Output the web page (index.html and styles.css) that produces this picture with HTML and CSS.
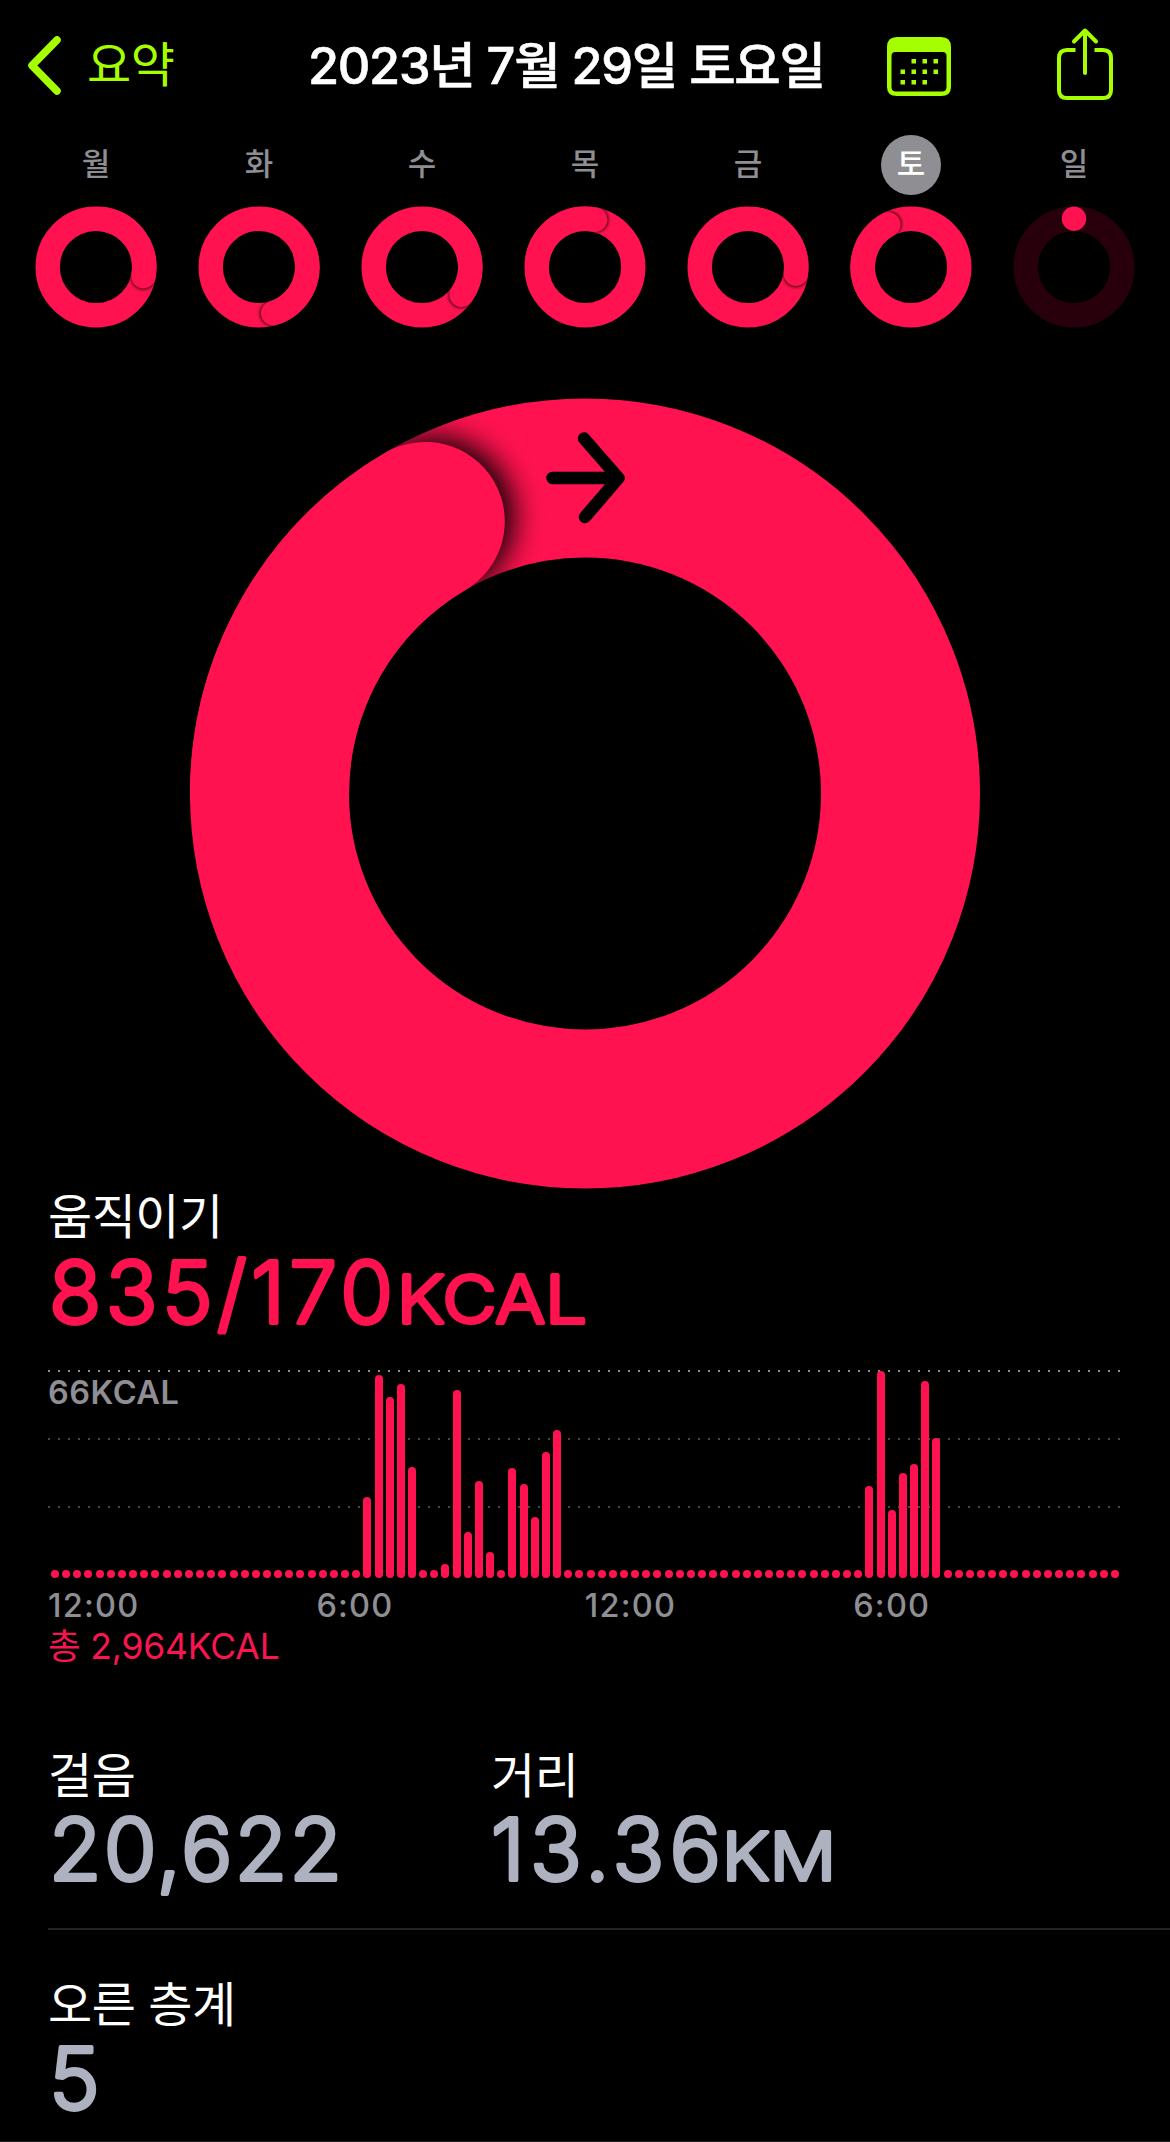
FILE: index.html
```html
<!DOCTYPE html>
<html lang="ko">
<head>
	<meta charset="utf-8">
	<title>2023년 7월 29일 토요일</title>
	<link rel="stylesheet" href="styles.css">
</head>
<body>
	<header>
		<a class="back">
			<svg class="chevron" width="36" height="60" viewBox="0 0 36 60"><path d="M30 5 L5 30.500 L30 56"/></svg>
			<span>요약</span>
		</a>
		<h1>2023년 7월 29일 토요일</h1>
		<svg class="calendar" width="64" height="60" viewBox="0 0 64 60">
			<path fill-rule="evenodd" d="M10 0H54Q64 0 64 10V50Q64 59 54 59H10Q0 59 0 50V10Q0 0 10 0ZM8.500 15Q4.500 15 4.500 19V50Q4.500 54.500 9 54.500H55Q59.500 54.500 59.500 50V19Q59.500 15 55.500 15Z"/>
			<path d="M24.500 22h4.500v4.500h-4.500zM35.500 22h4.500v4.500h-4.500zM46.500 22h4.500v4.500h-4.500zM13.500 32.500h4.500v4.500h-4.500zM24.500 32.500h4.500v4.500h-4.500zM35.500 32.500h4.500v4.500h-4.500zM46.500 32.500h4.500v4.500h-4.500zM13.500 43h4.500v4.500h-4.500zM24.500 43h4.500v4.500h-4.500zM35.500 43h4.500v4.500h-4.500z"/>
		</svg>
		<svg class="share" width="56" height="72" viewBox="0 0 56 72">
			<path d="M18.500 22H10Q2 22 2 30V62Q2 70 10 70H46Q54 70 54 62V30Q54 22 46 22H37.500"/>
			<path class="round" d="M28 45V2.500M17 13.500L28 2.500L39 13.500"/>
		</svg>
	</header>

	<div id="week"></div>

	<svg id="ring" viewBox="0 0 792 792" width="792" height="792">
		<defs>
			<clipPath id="band">
				<path clip-rule="evenodd" d="M1 396.500a395 395 0 1 0 790 0a395 395 0 1 0 -790 0ZM160 396.500a236 236 0 1 0 472 0a236 236 0 1 0 -472 0Z"/>
			</clipPath>
			<filter id="soft" x="-50%" y="-50%" width="200%" height="200%">
				<feGaussianBlur stdDeviation="15"/>
			</filter>
		</defs>
		<circle class="band" cx="396" cy="396.500" r="315.500"/>
		<g clip-path="url(#band)">
			<circle cx="245" cy="120" r="79.500" filter="url(#soft)"/>
		</g>
		<path class="band cap" d="M80.500 396.500A315.500 315.500 0 0 1 236.300 124.400"/>
		<path class="arrow" d="M363.500 81H429M395 41.500L429.500 81L396 120"/>
	</svg>

	<section class="move">
		<h2>움직이기</h2>
		<svg class="value" width="600" height="90">
			<text x="1" y="75" textLength="344">835/170</text>
			<text class="unit" x="349" y="75" textLength="190" lengthAdjust="spacingAndGlyphs">KCAL</text>
		</svg>
		<div id="chart">
			<span class="peak">66KCAL</span>
			<div id="bars"></div>
		</div>
		<div class="hours">
			<span>12:00</span>
			<span>6:00</span>
			<span>12:00</span>
			<span>6:00</span>
		</div>
		<p class="total">총 2,964KCAL</p>
	</section>

	<section class="stats">
		<div class="stat">
			<h2>걸음</h2>
			<svg class="value" width="400" height="100">
				<text x="1" y="75" textLength="293">20,622</text>
			</svg>
		</div>
		<div class="stat">
			<h2>거리</h2>
			<svg class="value" width="400" height="100">
				<text x="0" y="75" textLength="230">13.36</text>
				<text class="unit" x="231" y="75" textLength="114" lengthAdjust="spacingAndGlyphs">KM</text>
			</svg>
		</div>
	</section>
	<section class="stats floors">
		<div class="stat">
			<h2>오른 층계</h2>
			<svg class="value" width="400" height="100">
				<text x="1" y="75">5</text>
			</svg>
		</div>
	</section>

	<script>
		// end = angle of the ring's tip, clockwise from the top
		var days = [
			{ name: "월", end: 101 },
			{ name: "화", end: 163 },
			{ name: "수", end: 125 },
			{ name: "목", end: 12 },
			{ name: "금", end: 98 },
			{ name: "토", end: 332, selected: true },
			{ name: "일", end: 0, empty: true }
		];

		// quarter hours with activity, bar heights in px
		var active = {
			28: 81, 29: 203, 30: 181, 31: 194, 32: 111,
			35: 14, 36: 188, 37: 46, 38: 97, 39: 26,
			41: 110, 42: 94, 43: 61, 44: 126, 45: 148,
			73: 92, 74: 207, 75: 68, 76: 105, 77: 114, 78: 197, 79: 140
		};

		drawWeek();
		drawBars();

		function drawWeek() {
			var html = "";
			for (var i = 0; i < days.length; i++) {
				html += '<div class="day' + (days[i].selected ? " selected" : "") + '">';
				html += "<span>" + days[i].name + "</span>" + miniRing(days[i], i) + "</div>";
			}
			document.querySelector("#week").innerHTML = html;
		}

		function miniRing(day, i) {
			var svg = '<svg width="122" height="122" viewBox="-61 -61 122 122">';
			if (day.empty) {
				return svg + '<circle class="track" r="48.3"/><circle class="dot" cy="-48.3" r="12.2"/></svg>';
			}
			svg += '<clipPath id="mini' + i + '"><path clip-rule="evenodd" d="M-60.500 0a60.500 60.500 0 1 0 121 0a60.500 60.500 0 1 0 -121 0ZM-36 0a36 36 0 1 0 72 0a36 36 0 1 0 -72 0Z"/></clipPath>';
			svg += '<circle class="track full" r="48.3"/>';
			svg += '<g clip-path="url(#mini' + i + ')"><g transform="rotate(' + day.end + ')">';
			svg += '<circle class="shade" cx="1" cy="-48.3" r="12.5"/></g></g>';
			svg += '<path class="tip" transform="rotate(' + day.end + ')" d="M-48.300 0A48.300 48.300 0 0 1 0 -48.300"/></svg>';
			return svg;
		}

		function drawBars() {
			var bars = document.querySelector("#bars");
			for (var i = 0; i < 96; i++) {
				var bar = document.createElement("div");
				bar.className = "bar";
				if (active[i]) {
					bar.style.height = active[i] + "px";
				}
				bars.appendChild(bar);
			}
		}
	</script>
</body>
</html>
```
FILE: styles.css
```css
* {
	box-sizing: border-box;
}

body {
	margin: 0;
	height: 2142px;
	overflow: hidden;
	background-color: #000;
	color: #fff;
	font-family: Inter, "Noto Sans CJK KR", sans-serif;
	border-bottom: 1px solid #1c1c1e;
}

svg {
	display: block;
	overflow: visible;
}

h1, h2, p {
	margin: 0;
}

header {
	height: 130px;
	display: flex;
	align-items: center;
	padding-left: 27px;
	fill: #a6ff00;
	color: #a6ff00;
}

.back {
	display: flex;
	align-items: center;
	width: 281px;
	font-size: 48px;
	letter-spacing: -0.5px;
}

.back span {
	margin-left: 24px;
	margin-top: -8px;
}

.chevron path {
	fill: none;
	stroke: #a6ff00;
	stroke-width: 7.5;
	stroke-linecap: round;
	stroke-linejoin: round;
}

h1 {
	width: 579px;
	margin-top: -7px;
	color: #fff;
	font-size: 50.5px;
	font-weight: 500;
	letter-spacing: -1.3px;
	white-space: nowrap;
	-webkit-text-stroke: 0.6px #fff;
}

.calendar {
	margin-top: 3px;
}

.share {
	margin-left: 106px;
	margin-top: -2px;
}

.share path {
	fill: none;
	stroke: #a6ff00;
	stroke-width: 4;
}

.share .round {
	stroke-linecap: round;
	stroke-linejoin: round;
}

#week {
	display: grid;
	grid-template-columns: repeat(7, 163px);
	justify-content: center;
	height: 267px;
	padding-top: 5px;
}

.day {
	display: flex;
	flex-direction: column;
	align-items: center;
	gap: 11px;
}

.day span {
	width: 60px;
	height: 60px;
	border-radius: 50%;
	line-height: 58px;
	text-align: center;
	font-size: 31px;
	font-weight: 500;
	color: #8e8e93;
}

.selected span {
	background-color: #8e8e93;
	color: #fff;
}

.track, .tip {
	fill: none;
	stroke: #28000b;
	stroke-width: 24.4;
}

.full, .tip {
	stroke: #ff124f;
}

.tip {
	stroke-linecap: round;
}

.dot {
	fill: #ff124f;
}

.shade {
	fill: rgba(50, 0, 15, 0.85);
	filter: blur(1.8px);
}

#ring {
	margin: 0 auto;
}

.band {
	fill: none;
	stroke: #ff124f;
	stroke-width: 159;
}

.cap {
	stroke-linecap: round;
}

.arrow {
	fill: none;
	stroke: #000;
	stroke-width: 12.5;
	stroke-linecap: round;
	stroke-linejoin: round;
}

.move {
	height: 555px;
	padding: 0 49px 0 48px;
}

h2 {
	height: 59px;
	line-height: 59px;
	font-size: 48px;
	font-weight: 400;
	letter-spacing: -0.5px;
	white-space: nowrap;
}

.move h2 {
	line-height: 56px;
}

.value text {
	font-size: 85.5px;
	font-weight: 300;
	fill: #ff124f;
	stroke: #ff124f;
	stroke-width: 3.8;
	stroke-linejoin: round;
}

.value .unit {
	font-size: 66px;
}

.stats .value text {
	fill: #aeb2c0;
	stroke: #aeb2c0;
}

#chart {
	height: 208px;
	margin-top: 32px;
	background-image:
		repeating-linear-gradient(to right, #8e8e93 0, #8e8e93 2px, transparent 2px, transparent 10px),
		repeating-linear-gradient(to right, #48484a 0, #48484a 2px, transparent 2px, transparent 10px),
		repeating-linear-gradient(to right, #48484a 0, #48484a 2px, transparent 2px, transparent 10px);
	background-size: 100% 2px;
	background-repeat: no-repeat;
	background-position: 0 0, 0 68px, 0 136px;
	display: grid;
}

.peak {
	grid-area: 1 / 1;
	margin-top: 3px;
	line-height: 40px;
}

.peak, .hours {
	font-size: 32.5px;
	font-weight: 600;
	letter-spacing: 0.5px;
	color: #8e8e93;
}

#bars {
	grid-area: 1 / 1;
	display: flex;
	justify-content: space-between;
	align-items: flex-end;
	padding: 0 2px 0 3px;
}

.bar {
	width: 8px;
	height: 8px;
	border-radius: 4px;
	background-color: #ff124f;
}

.hours {
	display: grid;
	grid-template-columns: repeat(4, 268.4px);
	height: 44px;
	line-height: 40px;
	padding-top: 8px;
	font-weight: 500;
	letter-spacing: 1.2px;
}

.total {
	font-size: 35.5px;
	line-height: 50px;
	letter-spacing: -0.2px;
	color: #fa1550;
}

.stats {
	display: flex;
	height: 186px;
	margin-left: 48px;
	padding-top: 2px;
	border-bottom: 2px solid #232325;
}

.stat {
	width: 443px;
}

.floors {
	height: 210px;
	padding-top: 45px;
	border: 0;
}
```
